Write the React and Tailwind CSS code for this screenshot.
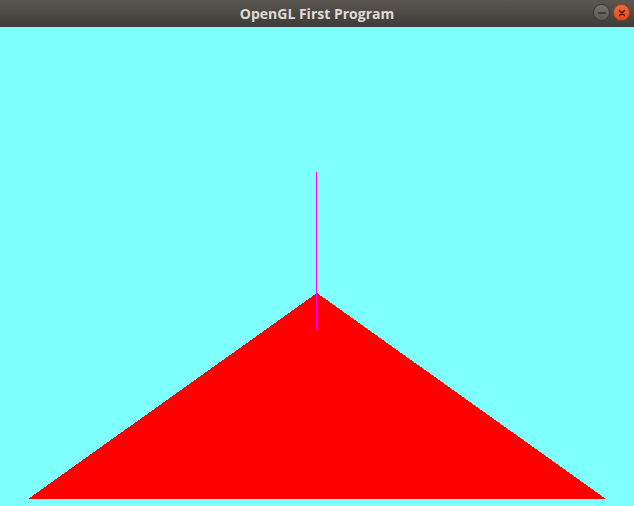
import React from 'react';

const TitleBar = () => (
  <div className="relative flex h-[27px] items-center justify-center bg-gradient-to-b from-[#5a5751] to-[#3e3c38]">
    <span className="font-['Open_Sans','DejaVu_Sans',sans-serif] text-[14px] font-bold leading-none text-[#dfdbd2]">
      OpenGL First Program
    </span>
    {/* window buttons */}
    <div className="absolute right-[4px] top-[4px] flex gap-[3px]">
      <div className="flex h-[17px] w-[17px] items-center justify-center rounded-full border border-[#3a3935] bg-gradient-to-b from-[#76746f] to-[#5a5854]">
        <div className="h-[2px] w-[8px] rounded bg-[#3c3b37]" />
      </div>
      <div className="flex h-[17px] w-[17px] items-center justify-center rounded-full border border-[#b43d14] bg-gradient-to-b from-[#f36b3e] to-[#e04c1b]">
        <svg width="8" height="8" viewBox="0 0 8 8">
          <path d="M1.5 1.5L6.5 6.5M6.5 1.5L1.5 6.5" stroke="#4a1a08" strokeWidth="1.5" strokeLinecap="round" />
        </svg>
      </div>
    </div>
  </div>
);

const Canvas = () => (
  <div className="h-[479px] w-full bg-[#80ffff]">
    <svg width="634" height="479" viewBox="0 0 634 479" shapeRendering="crispEdges">
      <polygon points="317,266 606,472 28,472" fill="#ff0000" />
      <line x1="316.5" y1="145" x2="316.5" y2="303" stroke="#ff00ff" strokeWidth="1" />
    </svg>
  </div>
);

export default function App() {
  return (
    <div className="w-[634px] h-[506px] overflow-hidden">
      <TitleBar />
      <Canvas />
    </div>
  );
}
